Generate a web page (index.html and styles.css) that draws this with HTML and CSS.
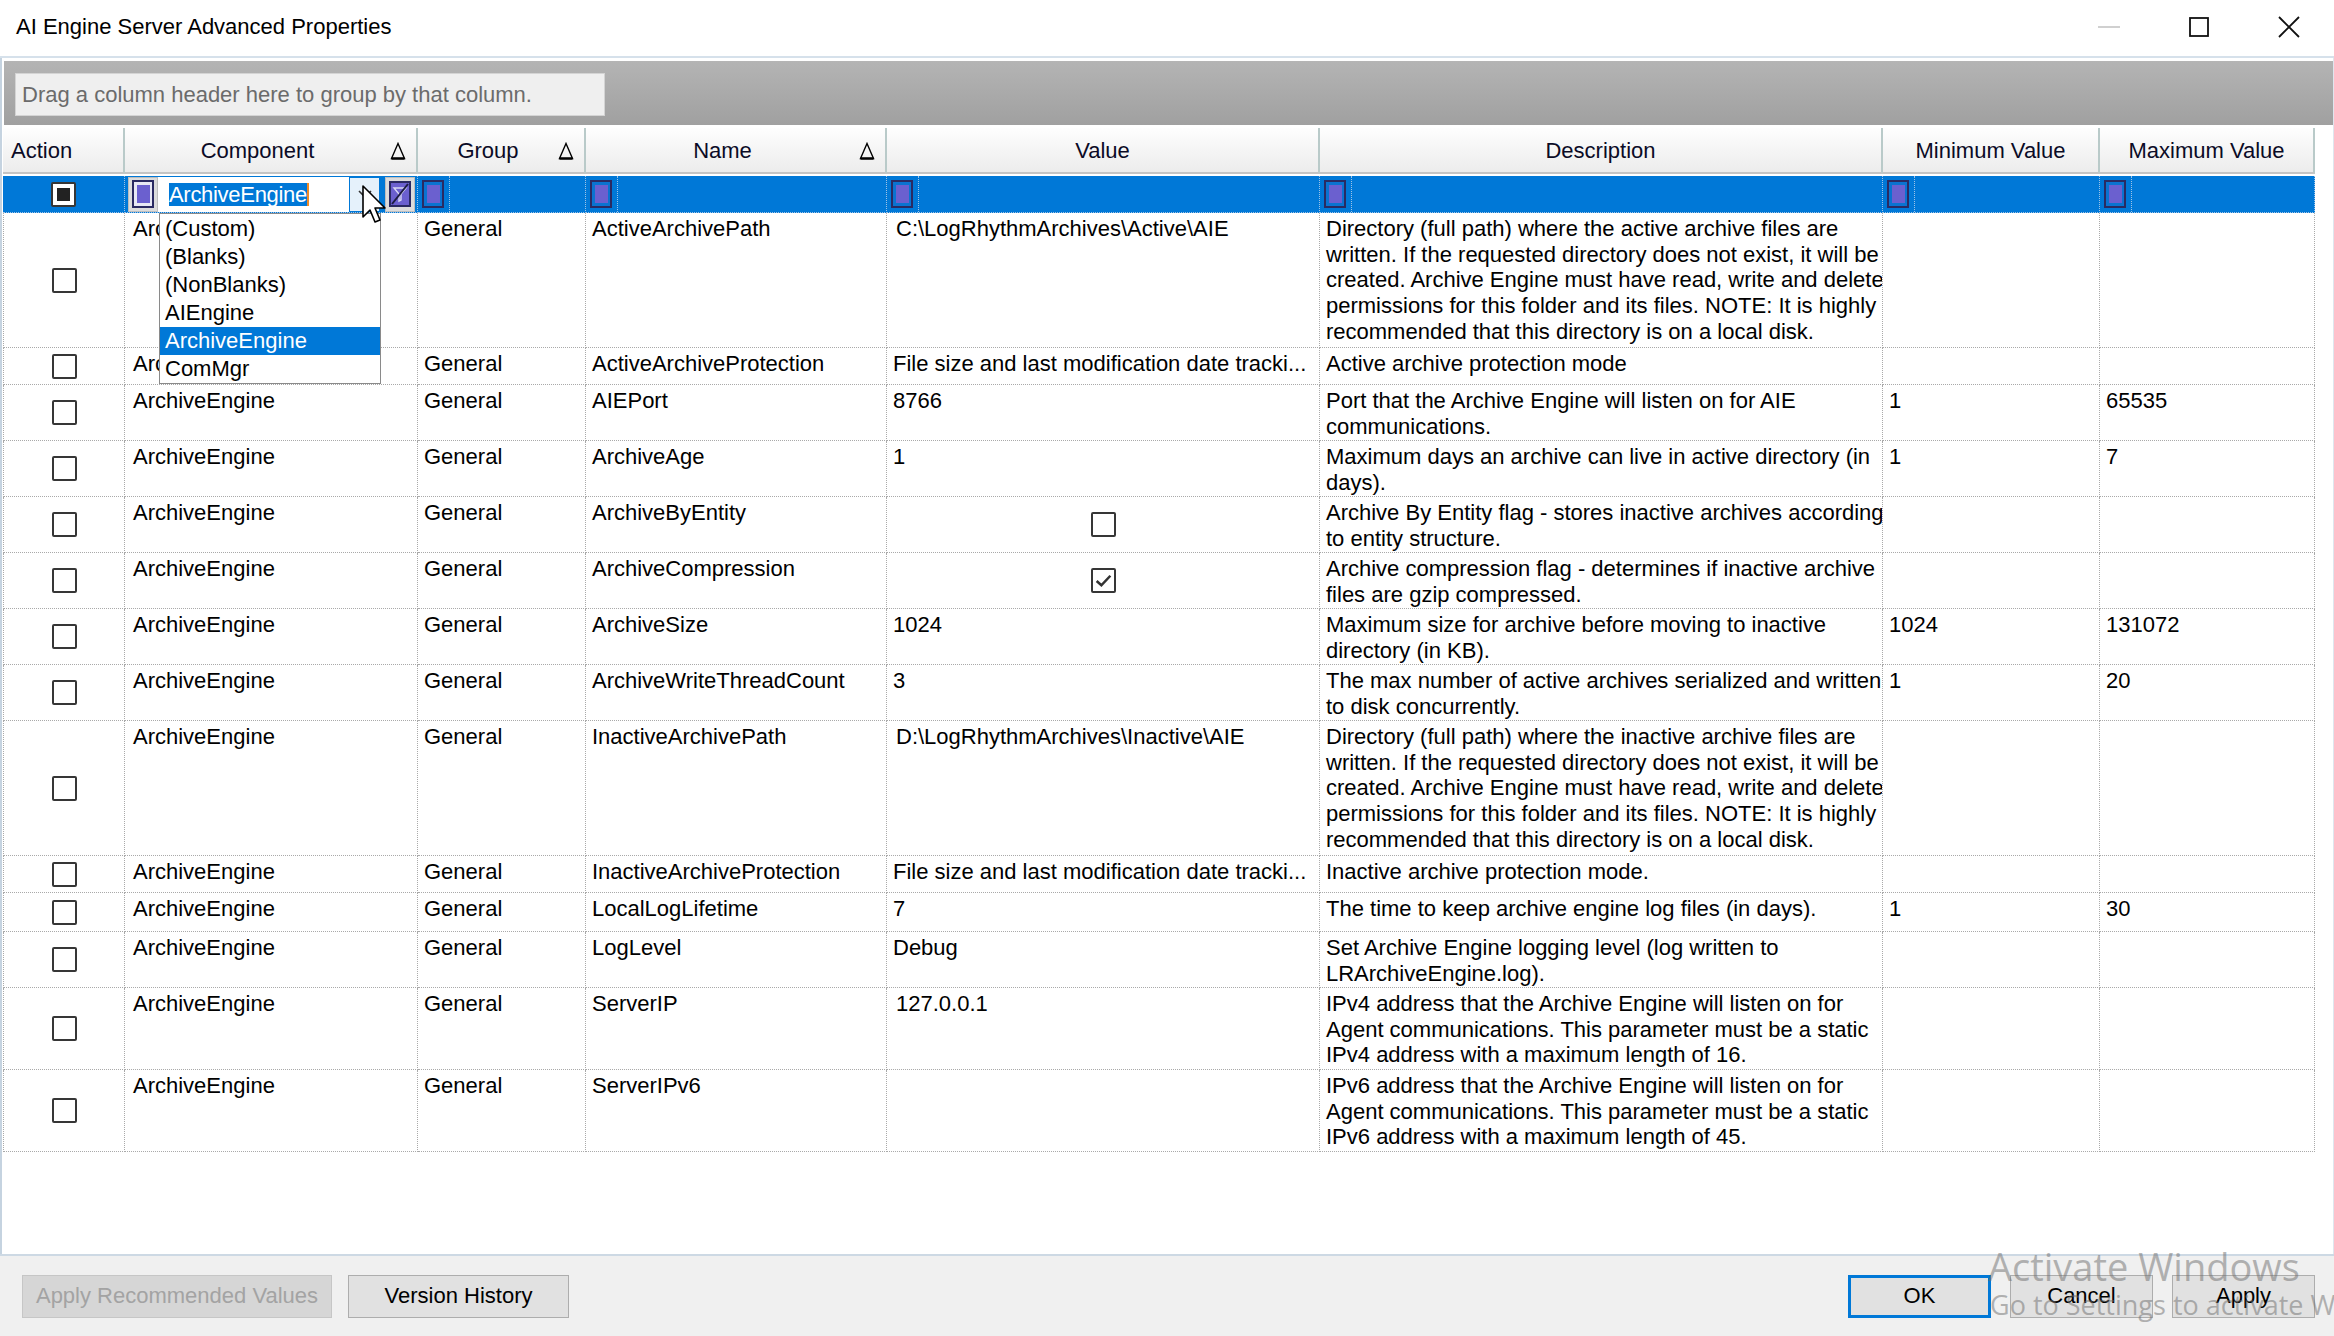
FILE: index.html
```html
<!DOCTYPE html>
<html lang="en">
<head>
    <meta charset="UTF-8">
    <title>AI Engine Server Advanced Properties</title>
    <link rel="stylesheet" href="styles.css">
</head>
<body>
<div class="window">
    <div class="titlebar">
        <div class="title">AI Engine Server Advanced Properties</div>
        <div class="controls">
            <div class="ctl"><svg width="24" height="24" viewBox="0 0 24 24"><path d="M1 12h22" stroke="#c4c4c4" stroke-width="1.6"/></svg></div>
            <div class="ctl"><svg width="24" height="24" viewBox="0 0 24 24"><rect x="3" y="3" width="18" height="18" fill="none" stroke="#111" stroke-width="1.8"/></svg></div>
            <div class="ctl"><svg width="24" height="24" viewBox="0 0 24 24"><path d="M2 2L22 22M22 2L2 22" stroke="#111" stroke-width="1.8"/></svg></div>
        </div>
    </div>

    <div class="main">
        <div class="group-panel">
            <div class="group-box">Drag a column header here to group by that column.</div>
        </div>

        <div class="grid">
            <!-- column headers -->
            <div class="hdr left">Action</div>
            <div class="hdr"><span class="hdr-text">Component</span><svg class="sort" width="16" height="18" viewBox="0 0 16 18"><path d="M8 1.5L1.5 16.5H14.5Z" fill="none" stroke="#000" stroke-width="1.4"/><path d="M1.5 16.5H14.5" stroke="#000" stroke-width="2.4"/></svg></div>
            <div class="hdr"><span class="hdr-text">Group</span><svg class="sort" width="16" height="18" viewBox="0 0 16 18"><path d="M8 1.5L1.5 16.5H14.5Z" fill="none" stroke="#000" stroke-width="1.4"/><path d="M1.5 16.5H14.5" stroke="#000" stroke-width="2.4"/></svg></div>
            <div class="hdr"><span class="hdr-text">Name</span><svg class="sort" width="16" height="18" viewBox="0 0 16 18"><path d="M8 1.5L1.5 16.5H14.5Z" fill="none" stroke="#000" stroke-width="1.4"/><path d="M1.5 16.5H14.5" stroke="#000" stroke-width="2.4"/></svg></div>
            <div class="hdr"><span class="hdr-text">Value</span></div>
            <div class="hdr"><span class="hdr-text">Description</span></div>
            <div class="hdr"><span class="hdr-text">Minimum Value</span></div>
            <div class="hdr"><span class="hdr-text">Maximum Value</span></div>

            <!-- filter row -->
            <div class="flt center"><span class="cb mixed"><i></i></span></div>
            <div class="flt comp">
                <span class="opbtn"><span class="opicon"></span></span>
                <span class="editor">
                    <span class="sel">ArchiveEngine</span><span class="caret"></span>
                    <span class="dd-btn"><svg width="14" height="10" viewBox="0 0 14 10"><path d="M1 2L7 8L13 2" fill="none" stroke="#333" stroke-width="1.6"/></svg></span>
                </span>
                <span class="opbtn clear"><svg width="22" height="26" viewBox="0 0 22 26"><rect x="1" y="1" width="20" height="24" fill="#6b60cf" stroke="#2a2a62" stroke-width="2"/><path d="M5 7H17L12 13V19L10 20V13Z" fill="none" stroke="#d8d8f4" stroke-width="1.4"/><path d="M3 23L19 3" stroke="#1c1c40" stroke-width="2"/></svg></span>
            </div>
            <div class="flt"><span class="fop"><span class="opicon"></span></span></div>
            <div class="flt"><span class="fop"><span class="opicon"></span></span></div>
            <div class="flt"><span class="fop"><span class="opicon"></span></span></div>
            <div class="flt"><span class="fop"><span class="opicon"></span></span></div>
            <div class="flt"><span class="fop"><span class="opicon"></span></span></div>
            <div class="flt"><span class="fop"><span class="opicon"></span></span></div>

            <!-- ActiveArchivePath -->
            <div class="c center h5"><span class="cb"></span></div>
            <div class="c comp-c h5">ArchiveEngine</div>
            <div class="c h5">General</div>
            <div class="c h5">ActiveArchivePath</div>
            <div class="c pad h5">C:\LogRhythmArchives\Active\AIE</div>
            <div class="c desc h5">Directory (full path) where the active archive files are<br>written. If the requested directory does not exist, it will be<br>created. Archive Engine must have read, write and delete<br>permissions for this folder and its files. NOTE: It is highly<br>recommended that this directory is on a local disk.</div>
            <div class="c h5"></div>
            <div class="c h5"></div>

            <!-- ActiveArchiveProtection -->
            <div class="c center h1"><span class="cb"></span></div>
            <div class="c comp-c h1">ArchiveEngine</div>
            <div class="c h1">General</div>
            <div class="c h1">ActiveArchiveProtection</div>
            <div class="c h1">File size and last modification date tracki...</div>
            <div class="c desc h1">Active archive protection mode</div>
            <div class="c h1"></div>
            <div class="c h1"></div>

            <!-- AIEPort -->
            <div class="c center h2"><span class="cb"></span></div>
            <div class="c comp-c h2">ArchiveEngine</div>
            <div class="c h2">General</div>
            <div class="c h2">AIEPort</div>
            <div class="c h2">8766</div>
            <div class="c desc h2">Port that the Archive Engine will listen on for AIE<br>communications.</div>
            <div class="c h2">1</div>
            <div class="c h2">65535</div>

            <!-- ArchiveAge -->
            <div class="c center h2"><span class="cb"></span></div>
            <div class="c comp-c h2">ArchiveEngine</div>
            <div class="c h2">General</div>
            <div class="c h2">ArchiveAge</div>
            <div class="c h2">1</div>
            <div class="c desc h2">Maximum days an archive can live in active directory (in<br>days).</div>
            <div class="c h2">1</div>
            <div class="c h2">7</div>

            <!-- ArchiveByEntity -->
            <div class="c center h2"><span class="cb"></span></div>
            <div class="c comp-c h2">ArchiveEngine</div>
            <div class="c h2">General</div>
            <div class="c h2">ArchiveByEntity</div>
            <div class="c center h2"><span class="cb"></span></div>
            <div class="c desc h2">Archive By Entity flag - stores inactive archives according<br>to entity structure.</div>
            <div class="c h2"></div>
            <div class="c h2"></div>

            <!-- ArchiveCompression -->
            <div class="c center h2"><span class="cb"></span></div>
            <div class="c comp-c h2">ArchiveEngine</div>
            <div class="c h2">General</div>
            <div class="c h2">ArchiveCompression</div>
            <div class="c center h2"><span class="cb"><svg width="19" height="19" viewBox="0 0 18 18"><path d="M2.5 9.5L7 13.5L15.5 4.5" fill="none" stroke="#333" stroke-width="2.4"/></svg></span></div>
            <div class="c desc h2">Archive compression flag - determines if inactive archive<br>files are gzip compressed.</div>
            <div class="c h2"></div>
            <div class="c h2"></div>

            <!-- ArchiveSize -->
            <div class="c center h2"><span class="cb"></span></div>
            <div class="c comp-c h2">ArchiveEngine</div>
            <div class="c h2">General</div>
            <div class="c h2">ArchiveSize</div>
            <div class="c h2">1024</div>
            <div class="c desc h2">Maximum size for archive before moving to inactive<br>directory (in KB).</div>
            <div class="c h2">1024</div>
            <div class="c h2">131072</div>

            <!-- ArchiveWriteThreadCount -->
            <div class="c center h2"><span class="cb"></span></div>
            <div class="c comp-c h2">ArchiveEngine</div>
            <div class="c h2">General</div>
            <div class="c h2">ArchiveWriteThreadCount</div>
            <div class="c h2">3</div>
            <div class="c desc h2">The max number of active archives serialized and written<br>to disk concurrently.</div>
            <div class="c h2">1</div>
            <div class="c h2">20</div>

            <!-- InactiveArchivePath -->
            <div class="c center h5"><span class="cb"></span></div>
            <div class="c comp-c h5">ArchiveEngine</div>
            <div class="c h5">General</div>
            <div class="c h5">InactiveArchivePath</div>
            <div class="c pad h5">D:\LogRhythmArchives\Inactive\AIE</div>
            <div class="c desc h5">Directory (full path) where the inactive archive files are<br>written. If the requested directory does not exist, it will be<br>created. Archive Engine must have read, write and delete<br>permissions for this folder and its files. NOTE: It is highly<br>recommended that this directory is on a local disk.</div>
            <div class="c h5"></div>
            <div class="c h5"></div>

            <!-- InactiveArchiveProtection -->
            <div class="c center h1"><span class="cb"></span></div>
            <div class="c comp-c h1">ArchiveEngine</div>
            <div class="c h1">General</div>
            <div class="c h1">InactiveArchiveProtection</div>
            <div class="c h1">File size and last modification date tracki...</div>
            <div class="c desc h1">Inactive archive protection mode.</div>
            <div class="c h1"></div>
            <div class="c h1"></div>

            <!-- LocalLogLifetime -->
            <div class="c center h1b"><span class="cb"></span></div>
            <div class="c comp-c h1b">ArchiveEngine</div>
            <div class="c h1b">General</div>
            <div class="c h1b">LocalLogLifetime</div>
            <div class="c h1b">7</div>
            <div class="c desc h1b">The time to keep archive engine log files (in days).</div>
            <div class="c h1b">1</div>
            <div class="c h1b">30</div>

            <!-- LogLevel -->
            <div class="c center h2"><span class="cb"></span></div>
            <div class="c comp-c h2">ArchiveEngine</div>
            <div class="c h2">General</div>
            <div class="c h2">LogLevel</div>
            <div class="c h2">Debug</div>
            <div class="c desc h2">Set Archive Engine logging level (log written to<br>LRArchiveEngine.log).</div>
            <div class="c h2"></div>
            <div class="c h2"></div>

            <!-- ServerIP -->
            <div class="c center h3"><span class="cb"></span></div>
            <div class="c comp-c h3">ArchiveEngine</div>
            <div class="c h3">General</div>
            <div class="c h3">ServerIP</div>
            <div class="c pad h3">127.0.0.1</div>
            <div class="c desc h3">IPv4 address that the Archive Engine will listen on for<br>Agent communications. This parameter must be a static<br>IPv4 address with a maximum length of 16.</div>
            <div class="c h3"></div>
            <div class="c h3"></div>

            <!-- ServerIPv6 -->
            <div class="c center h3"><span class="cb"></span></div>
            <div class="c comp-c h3">ArchiveEngine</div>
            <div class="c h3">General</div>
            <div class="c h3">ServerIPv6</div>
            <div class="c h3"></div>
            <div class="c desc h3">IPv6 address that the Archive Engine will listen on for<br>Agent communications. This parameter must be a static<br>IPv6 address with a maximum length of 45.</div>
            <div class="c h3"></div>
            <div class="c h3"></div>
        </div>
    </div>

    <div class="footer">
        <button class="btn wide" disabled>Apply Recommended Values</button>
        <button class="btn history">Version History</button>
        <span class="spacer"></span>
        <button class="btn dlg default">OK</button>
        <button class="btn dlg">Cancel</button>
        <button class="btn dlg">Apply</button>
    </div>

    <!-- open value list of the Component filter -->
    <div class="dropdown">
        <div class="item">(Custom)</div>
        <div class="item">(Blanks)</div>
        <div class="item">(NonBlanks)</div>
        <div class="item">AIEngine</div>
        <div class="item active">ArchiveEngine</div>
        <div class="item">ComMgr</div>
    </div>

    <svg class="pointer" width="26" height="42" viewBox="0 0 26 42"><path d="M2 2V33L9 26L14 38L19 36L14 24H24Z" fill="#fff" stroke="#000" stroke-width="1.6" stroke-linejoin="round"/></svg>

    <div class="watermark">
        <div class="wm-big">Activate Windows</div>
        <div class="wm-small">Go to Settings to activate Windows.</div>
    </div>
</div>
</body>
</html>
```
FILE: styles.css
```css
* {
    box-sizing: border-box;
}

body {
    margin: 0;
    background: #fff;
    font-family: "Liberation Sans", Arial, sans-serif;
    font-size: 22px;
    color: #000;
}

.window {
    position: relative;
    width: 2334px;
    height: 1336px;
    display: flex;
    flex-direction: column;
    overflow: hidden;
}

/* Title bar */
.titlebar {
    height: 58px;
    display: flex;
    align-items: center;
    padding-left: 16px;
    padding-bottom: 2px;
    border-bottom: 2px solid #d6e1eb;
}

.title {
    flex: 1;
}

.controls {
    display: flex;
    align-self: stretch;
}

.ctl {
    width: 90px;
    display: flex;
    align-items: center;
    justify-content: center;
}

/* Grid area */
.main {
    flex: 1;
    border-left: 2px solid #c5d3e0;
    border-right: 1px solid #dfe6ee;
    padding-top: 3px;
}

.group-panel {
    height: 64px;
    margin: 0 0 0 2px;
    padding: 12px 0 0 11px;
    background: linear-gradient(#b4b4b4, #a0a0a0);
}

.group-box {
    width: 590px;
    height: 43px;
    line-height: 41px;
    padding-left: 6px;
    background: #efefef;
    border: 1px solid #d4d4d4;
    color: #6b6b6b;
}

.grid {
    display: grid;
    grid-template-columns: 122px 293px 168px 301px 433px 563px 217px 215px;
    margin: 3px 0 0 1px;
    width: 2312px;
}

.hdr {
    height: 46px;
    display: flex;
    align-items: center;
    padding-top: 2px;
    background: linear-gradient(#fefefe, #ececec);
    border-right: 2px solid #b9cac9;
    border-bottom: 2px solid #c4c4c4;
    color: #0b0b26;
}

.hdr.left {
    padding-left: 8px;
}

.hdr-text {
    flex: 1;
    text-align: center;
}

.sort {
    margin-right: 10px;
}

/* Filter row */
.flt {
    height: 37px;
    margin-top: 2px;
    background: #0078d7;
    border-right: 1px dotted #9fc3e6;
    border-bottom: 1px dotted #9fc3e6;
    display: flex;
    align-items: center;
}

.flt:first-of-type {
    border-left: 1px dotted #9fc3e6;
}

.fop {
    width: 32px;
    height: 100%;
    display: flex;
    align-items: center;
    padding-left: 4px;
    border-right: 1px dotted #9fc3e6;
}

.opicon {
    display: flex;
    align-items: center;
    justify-content: center;
    width: 22px;
    height: 28px;
    border: 2px solid #2a2a62;
    background: #0a73d0;
}

.opicon::before {
    content: "";
    width: 13px;
    height: 18px;
    background: #6b60cf;
}

.comp {
    padding-left: 3px;
}

.opbtn {
    width: 30px;
    height: 35px;
    display: flex;
    align-items: center;
    justify-content: center;
    background: #dcdcdc;
    border: 1px solid #bdbdbd;
}

.opbtn .opicon {
    background: #e8e8f4;
}

.editor {
    flex: 1;
    height: 35px;
    display: flex;
    align-items: center;
    background: #fff;
    padding-left: 11px;
}

.sel {
    background: #0078d7;
    color: #fff;
    line-height: 23px;
    letter-spacing: -0.3px;
}

.caret {
    width: 2px;
    height: 23px;
    background: #f08a24;
}

.dd-btn {
    margin-left: auto;
    width: 31px;
    height: 35px;
    display: flex;
    align-items: center;
    justify-content: center;
    background: #e5f1fb;
    border: 1px solid #0078d7;
}

.opbtn.clear {
    margin-left: 5px;
    margin-right: 2px;
}

/* Data cells */
.c {
    padding: 3px 6px 0;
    line-height: 25.7px;
    border-right: 1px dotted #a9a9a9;
    border-bottom: 1px dotted #a9a9a9;
    white-space: nowrap;
    overflow: hidden;
}

.c:nth-child(8n+1) {
    border-left: 1px dotted #a9a9a9;
}

.comp-c {
    padding-left: 8px;
}

.pad {
    padding-left: 9px;
}

.h1 { height: 37px; }
.h1b { height: 39px; }
.h2 { height: 56px; }
.h3 { height: 82px; }
.h5 { height: 135px; }

.center {
    display: flex;
    align-items: center;
    justify-content: center;
    padding: 0;
}

.cb {
    width: 25px;
    height: 25px;
    border: 2px solid #363636;
    border-radius: 2px;
    background: #fff;
    display: flex;
    align-items: center;
    justify-content: center;
}

.cb.mixed i {
    width: 13px;
    height: 13px;
    background: #222;
}

/* Dropdown list of the filter editor */
.dropdown {
    position: absolute;
    left: 159px;
    top: 213px;
    width: 222px;
    height: 171px;
    padding-top: 1px;
    background: #fff;
    border: 1px solid #8a8a8a;
}

.item {
    height: 28px;
    line-height: 28px;
    padding-left: 5px;
}

.item.active {
    background: #0078d7;
    color: #fff;
}

.pointer {
    position: absolute;
    left: 361px;
    top: 184px;
}

/* Bottom buttons */
.footer {
    height: 82px;
    display: flex;
    align-items: center;
    padding: 0 19px 0 22px;
    background: #f0f0f0;
    border-top: 2px solid #cdd9e4;
}

.btn {
    height: 43px;
    font-family: inherit;
    font-size: 22px;
    color: #000;
    background: #e1e1e1;
    border: 1px solid #adadad;
    padding: 0;
}

.btn.wide {
    width: 310px;
    color: #a3a3a3;
    background: #d6d6d6;
    border-color: #c6c6c6;
}

.btn.history {
    width: 221px;
    margin-left: 16px;
}

.spacer {
    flex: 1;
}

.btn.dlg {
    width: 143px;
    margin-left: 19px;
}

.btn.default {
    border: 3px solid #0078d7;
}

.watermark {
    position: absolute;
    left: 1988px;
    top: 1242px;
    color: rgba(110, 110, 110, 0.5);
    font-family: "Open Sans", "Noto Sans", sans-serif;
    white-space: nowrap;
    pointer-events: none;
}

.wm-big {
    font-size: 38px;
    line-height: 48px;
}

.wm-small {
    font-size: 27px;
    line-height: 30px;
    margin-left: 2px;
}
```
